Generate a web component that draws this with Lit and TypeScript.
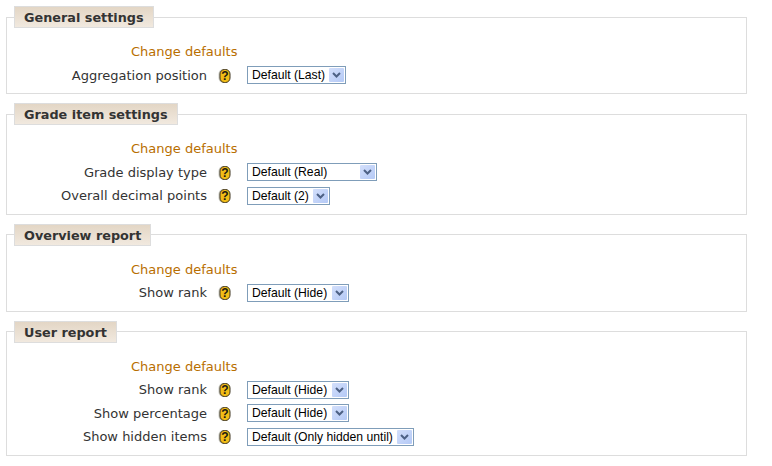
import { LitElement, html, css } from 'lit';
import { customElement } from 'lit/decorators.js';

interface Row { label: string; value: string; width: number; }
interface Section { title: string; rows: Row[]; }

const SECTIONS: Section[] = [
  { title: 'General settings', rows: [{ label: 'Aggregation position', value: 'Default (Last)', width: 99 }] },
  {
    title: 'Grade item settings',
    rows: [
      { label: 'Grade display type', value: 'Default (Real)', width: 130 },
      { label: 'Overall decimal points', value: 'Default (2)', width: 83 },
    ],
  },
  { title: 'Overview report', rows: [{ label: 'Show rank', value: 'Default (Hide)', width: 102 }] },
  {
    title: 'User report',
    rows: [
      { label: 'Show rank', value: 'Default (Hide)', width: 102 },
      { label: 'Show percentage', value: 'Default (Hide)', width: 102 },
      { label: 'Show hidden items', value: 'Default (Only hidden until)', width: 167 },
    ],
  },
];

@customElement('app-root')
export class AppRoot extends LitElement {
  static styles = css`
    :host {
      display: block;
      width: 772px;
      height: 466px;
      background: #fff;
      font-family: "DejaVu Sans", Verdana, sans-serif;
      font-size: 13px;
      color: #333;
      overflow: hidden;
    }
    .page {
      display: flex;
      flex-direction: column;
      gap: 9px;
      padding: 6px 25px 0 6px;
    }
    fieldset {
      margin: 0;
      padding: 0 0 6px;
      border: 1px solid #ddd;
      min-width: 0;
    }
    legend {
      margin: 0 0 -1px 7px;
      padding: 0 9px;
      height: 22px;
      box-sizing: border-box;
      line-height: 21px;
      font-weight: bold;
      font-size: 12.8px;
      color: #333;
      border: 1px solid #ddd;
      background: linear-gradient(#e3d6c5, #f1e9df);
    }
    .defaults {
      height: 23.5px;
      margin-top: 13px;
      padding-left: 124px;
      line-height: 23.5px;
      color: #b86e00;
    }
    .row {
      display: grid;
      grid-template-columns: 200px 40px auto;
      align-items: center;
      height: 23.5px;
    }
    .label { text-align: right; }
    .help {
      display: block;
      width: 13px;
      height: 15px;
      margin-left: 11px;
    }
    .select {
      display: flex;
      align-items: center;
      justify-content: space-between;
      box-sizing: border-box;
      height: 18px;
      border: 1px solid #7f9db9;
      background: #fff;
      padding: 0 1px 0 4px;
      font-family: "Liberation Sans", Arial, sans-serif;
      font-size: 12.2px;
      color: #000;
      white-space: nowrap;
    }
    .arrow {
      display: block;
      width: 15px;
      height: 14px;
      flex: none;
    }
  `;

  renderHelp() {
    return html`<svg class="help" viewBox="0 0 13 15">
      <rect x="0.5" y="1" width="11" height="14" rx="5" fill="#c9c9c0"></rect>
      <rect x="2" y="1.5" width="10" height="13" rx="4.500" fill="#f2bd16" stroke="#3f3520" stroke-width="1"></rect>
      <text x="7" y="12" text-anchor="middle" font-family="Liberation Sans" font-weight="bold" font-size="12" fill="#1c1a10">?</text>
    </svg>`;
  }

  renderArrow() {
    return html`<svg class="arrow" viewBox="0 0 15 14">
      <defs>
        <linearGradient id="btn" x1="0" y1="0" x2="1" y2="1">
          <stop offset="0" stop-color="#d3dffb"></stop>
          <stop offset="1" stop-color="#b4c9f6"></stop>
        </linearGradient>
      </defs>
      <rect x="0" y="0" width="15" height="14" rx="1" fill="url(#btn)"></rect>
      <path d="M4 5l3.500 3.500L11 5" fill="none" stroke="#4d6185" stroke-width="2"></path>
    </svg>`;
  }

  render() {
    return html`<div class="page">
      ${SECTIONS.map(s => html`
        <fieldset>
          <legend>${s.title}</legend>
          <div class="defaults">Change defaults</div>
          ${s.rows.map(r => html`
            <div class="row">
              <span class="label">${r.label}</span>
              ${this.renderHelp()}
              <div class="select" style="width:${r.width}px">
                <span>${r.value}</span>
                ${this.renderArrow()}
              </div>
            </div>
          `)}
        </fieldset>
      `)}
    </div>`;
  }
}
